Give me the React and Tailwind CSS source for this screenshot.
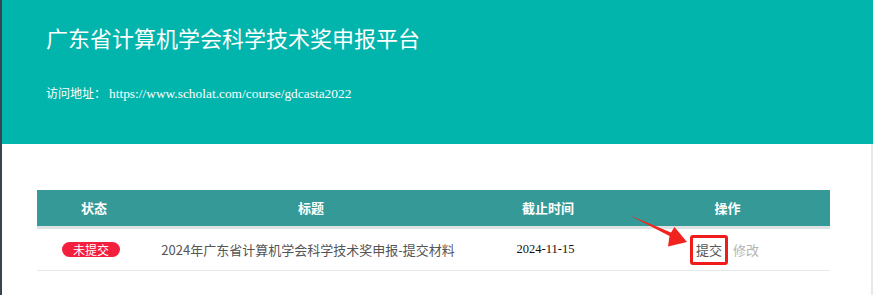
const cjk = "font-['Noto_Sans_CJK_SC','Noto_Sans',sans-serif]";

function Arrow() {
  return (
    <svg
      className="pointer-events-none absolute left-[620px] top-[205px]"
      width="80"
      height="50"
      viewBox="0 0 80 50"
    >
      <polygon points="9,10 51,27.5 54.5,22 67,37 48,41.5 49.5,31" fill="#f2231f" />
    </svg>
  );
}

export default function App() {
  return (
    <div className={`relative flex h-[295px] w-full overflow-hidden bg-white ${cjk}`}>
      <div className="w-[2px] shrink-0 bg-[#3a4450]" />
      <div className="flex min-w-0 flex-1 flex-col">
        <header className="h-[144px] bg-[#01b5ad] pl-[44px] pt-[21px] text-white">
          <h1 className="text-[22px] leading-[32px] font-normal">
            广东省计算机学会科学技术奖申报平台
          </h1>
          <p className="mt-[31px] flex items-baseline text-[12px] leading-[18px]">
            <span>访问地址：</span>
            <span className="ml-[3px] font-['Liberation_Serif',serif] text-[13.4px]">
              https://www.scholat.com/course/gdcasta2022
            </span>
          </p>
        </header>
        <main className="flex-1 border-r-2 border-[#e8e8e8] pl-[35px] pt-[46px]">
          <div className="w-[793px]">
            <div className="grid h-[36px] grid-cols-[114px_320px_154px_205px] items-center bg-[#359a97] text-center text-[13px] font-bold text-white">
              <div>状态</div>
              <div>标题</div>
              <div>截止时间</div>
              <div>操作</div>
            </div>
            <div className="h-[3px] bg-[#dde3e3]" />
            <div className="grid h-[42px] grid-cols-[114px_320px_154px_205px] items-center border-b border-[#e4e9ea] text-center text-[13px]">
              <div className="flex justify-center pr-[6px]">
                <span className="rounded-full bg-[#f21f3d] px-[11px] text-[12px] leading-[15px] text-white">
                  未提交
                </span>
              </div>
              <div className="pr-[6px] text-[#555]">2024年广东省计算机学会科学技术奖申报-提交材料</div>
              <div className="pr-[5px] font-['Liberation_Serif',serif] text-[12.5px] font-medium text-[#111]">
                2024-11-15
              </div>
              <div className="flex items-center pl-[65px]">
                <span className="rounded-[3px] border-[3px] border-[#f01c1c] px-[3px] leading-[24px] text-[#555]">
                  提交
                </span>
                <span className="ml-[5px] text-[#b4b4b4]">修改</span>
              </div>
            </div>
          </div>
        </main>
      </div>
      <Arrow />
    </div>
  );
}
